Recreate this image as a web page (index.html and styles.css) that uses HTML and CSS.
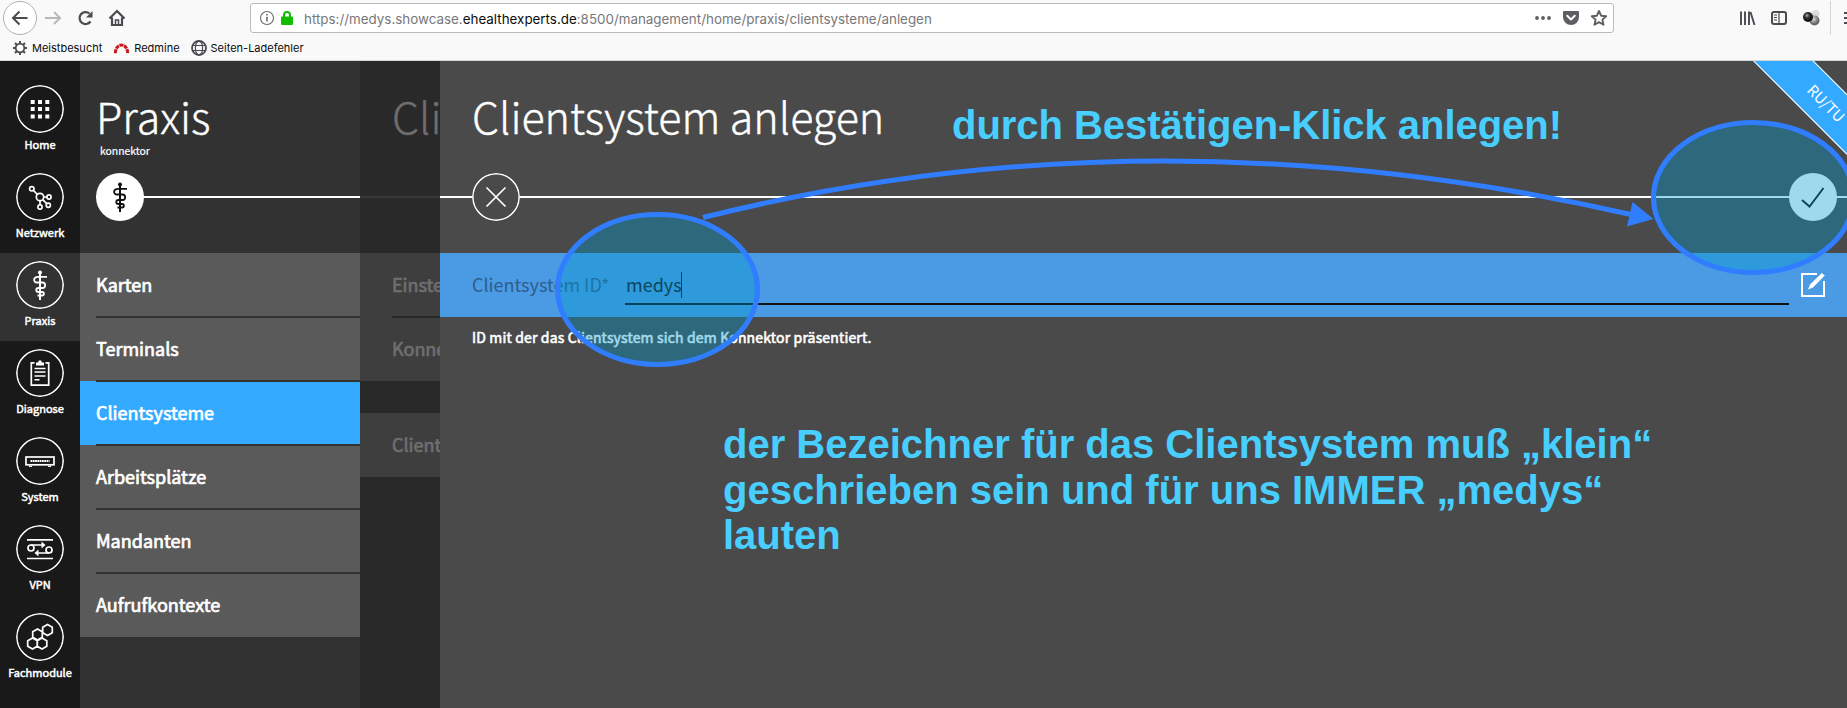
FILE: index.html
```html
<!DOCTYPE html>
<html lang="de">
<head>
<meta charset="utf-8">
<title>Clientsystem anlegen</title>
<link rel="stylesheet" href="styles.css">
</head>
<body>
<svg class="defs" width="0" height="0">
  <defs>
    <symbol id="staff" viewBox="0 0 48 48">
      <g fill="none" stroke="currentColor" stroke-width="1.8">
        <path d="M24 11V39" stroke-width="2"/>
        <path d="M31 15.8H22C17 15.8 17 21.5 21 21.5H26.500C30 21.500 30 27 26.500 27H22.500C19.500 27 19.500 31 22.500 31H26C28.500 31 28.500 34.500 26 34.500H21.500"/>
      </g>
      <circle cx="24" cy="11.500" r="2" fill="currentColor"/>
    </symbol>
  </defs>
</svg>
<div class="screen">
  <header class="browser">
    <div class="toolbar">
      <svg class="nav-icons" width="130" height="36" viewBox="0 0 130 36" fill="none" stroke="#4a4a4f" stroke-width="2">
        <circle cx="20" cy="18" r="16.500" fill="#fff" stroke="#b1b1b1" stroke-width="1"/>
        <path d="M27.500 18H13.500M19.500 11.500L13 18L19.500 24.500"/>
        <path d="M45 18H59.500M54 12L60 18L54 24" stroke="#b8b8ba"/>
        <path d="M90.500 21.500A6 6 0 1 1 89.500 13.500" stroke-width="2.200"/>
        <path d="M92.500 11V17.500H86Z" fill="#4a4a4f" stroke="none"/>
        <path d="M109.500 18.500L117 11L124.500 18.500M112 17.500V25H122V17.500" stroke-width="2.200"/>
        <path d="M115.500 25V20H118.500V25" stroke-width="1.500"/>
      </svg>
      <div class="urlbar">
        <svg width="29" height="28" viewBox="0 0 29 28">
          <circle cx="16" cy="14" r="6.500" fill="none" stroke="#6b6b6e" stroke-width="1.100"/>
          <path d="M16 12.800V17.500M16 10V11.500" stroke="#6b6b6e" stroke-width="1.600"/>
        </svg>
        <svg class="lock" width="14" height="28" viewBox="0 0 14 28">
          <path d="M4 13V11A3 3 0 0 1 10 11V13" fill="none" stroke="#12bc00" stroke-width="2"/>
          <rect x="1" y="12.500" width="12" height="8.500" rx="1" fill="#12bc00"/>
        </svg>
        <span class="url">https://medys.showcase.<b>ehealthexperts.de</b>:8500/management/home/praxis/clientsysteme/anlegen</span>
        <svg class="url-actions" width="84" height="28" viewBox="-1 0 84 28">
          <g fill="#5f5f63"><circle cx="7" cy="14" r="1.900"/><circle cx="13" cy="14" r="1.900"/><circle cx="19" cy="14" r="1.900"/>
          <path d="M34 7H48Q49 7 49 8V13A8 8 0 0 1 33 13V8Q33 7 34 7Z"/></g>
          <path d="M37.200 11.800L41 15.400L44.800 11.800" fill="none" stroke="#fff" stroke-width="2" stroke-linecap="round" stroke-linejoin="round"/>
          <path d="M69 7L71.100 11.700L76.200 12.200L72.400 15.600L73.500 20.700L69 18.100L64.500 20.700L65.600 15.600L61.800 12.200L66.900 11.700Z" fill="none" stroke="#5f5f63" stroke-width="1.900" stroke-linejoin="round"/>
        </svg>
      </div>
      <svg class="tool-icons" width="117" height="36" viewBox="1730 0 117 36">
        <defs><radialGradient id="ball" cx=".4" cy=".35"><stop offset="0" stop-color="#aaa"/><stop offset=".5" stop-color="#333"/><stop offset="1" stop-color="#111"/></radialGradient>
        <radialGradient id="ball2" cx=".4" cy=".35"><stop offset="0" stop-color="#ddd"/><stop offset="1" stop-color="#666"/></radialGradient></defs>
        <path d="M1741 11.500V25M1745 11.500V25M1749 11.500V25M1750.500 12L1754.500 25" stroke="#4a4a4f" stroke-width="1.900" fill="none"/>
        <rect x="1772" y="12" width="14" height="12" rx="2" fill="none" stroke="#4a4a4f" stroke-width="2"/>
        <path d="M1779 12V24M1774 15H1777M1774 17.500H1777M1774 20H1777" stroke="#4a4a4f" stroke-width="1.200"/>
        <circle cx="1815.500" cy="14" r="4" fill="#ddd"/><circle cx="1814.500" cy="20.500" r="5" fill="url(#ball2)"/><circle cx="1808" cy="17" r="5" fill="url(#ball)"/>
        <path d="M1830.500 1V35" stroke="#d5d5d5"/>
        <path d="M1844 13H1848M1844 18H1848M1844 23H1848" stroke="#4a4a4f" stroke-width="2"/>
      </svg>
    </div>
    <div class="bookmarks">
      <span class="bm"><svg width="16" height="16" viewBox="0 0 16 16" fill="none" stroke="#4a4a4f"><circle cx="8" cy="8" r="4.300" stroke-width="1.700"/><path d="M8 1V3.500M8 12.500V15M1 8H3.500M12.500 8H15M3 3L5 5M11 11L13 13M13 3L11 5M5 11L3 13" stroke-width="1.900"/></svg><span>Meistbesucht</span></span>
      <span class="bm"><svg width="17" height="16" viewBox="0 0 18 16" fill="none" stroke="#c8191e" stroke-width="3.200"><path d="M2.500 13.500C2.500 2 15.500 2 15.500 13.500" stroke-dasharray="4.200 .7"/></svg><span>Redmine</span></span>
      <span class="bm"><svg width="16" height="16" viewBox="0 0 16 16" fill="none" stroke="#4a4a4f"><circle cx="8" cy="8" r="7" stroke-width="1.800"/><ellipse cx="8" cy="8" rx="3.600" ry="7" stroke-width="1.200"/><path d="M1.500 5.500H14.500M1.500 10.500H14.500" stroke-width="1.200"/></svg><span>Seiten-Ladefehler</span></span>
    </div>
  </header>

  <div class="app">
    <nav class="rail">
      <a class="rail-item"><svg class="disc" viewBox="0 0 48 48"><circle class="ring" cx="24" cy="24" r="23.200"/><path fill="#fff" d="M14.700 15h4v4h-4zM22 15h4v4h-4zM29.300 15h4v4h-4zM14.700 22h4v4h-4zM22 22h4v4h-4zM29.300 22h4v4h-4zM14.700 29.500h4v4h-4zM22 29.500h4v4h-4zM29.300 29.500h4v4h-4z"/></svg><span>Home</span></a>
      <a class="rail-item"><svg class="disc" viewBox="0 0 48 48"><circle class="ring" cx="24" cy="24" r="23.200"/><g class="line"><circle cx="24" cy="24" r="3.700"/><circle cx="15.800" cy="15.800" r="2.200"/><circle cx="33" cy="24" r="2.100"/><circle cx="32.300" cy="32.300" r="2.100"/><circle cx="24" cy="34" r="2.100"/><path d="M17.500 17.500L21.300 21.300M27.700 24H31M26.700 26.700L30.700 30.700M24 27.700V32"/></g></svg><span>Netzwerk</span></a>
      <a class="rail-item active"><svg class="disc" viewBox="0 0 48 48"><circle class="ring" cx="24" cy="24" r="23.200"/><use href="#staff"/></svg><span>Praxis</span></a>
      <a class="rail-item"><svg class="disc" viewBox="0 0 48 48"><circle class="ring" cx="24" cy="24" r="23.200"/><g class="line"><path d="M18.500 13.800H15.300V36.200H32.700V13.800H29.500"/><path d="M18.500 19.500H29.500M18.500 23H29.500M18.500 27H29.500M18.500 30.700H23.500" stroke-width="1.500"/></g><path d="M20 16.500V13.500H22.200C22.200 10.500 25.800 10.500 25.800 13.500H28V16.500Z" fill="#fff"/></svg><span>Diagnose</span></a>
      <a class="rail-item"><svg class="disc" viewBox="0 0 48 48"><circle class="ring" cx="24" cy="24" r="23.200"/><g class="line"><rect x="10" y="20" width="28" height="7.800"/><path d="M14.500 24H33.500" stroke-dasharray="1.800 .5" stroke-width="2.200"/><path d="M13 29.300H16M32 29.300H35" stroke-width="1.200"/></g></svg><span>System</span></a>
      <a class="rail-item"><svg class="disc" viewBox="0 0 48 48"><circle class="ring" cx="24" cy="24" r="23.200"/><g class="line"><path d="M11 14.800H37M11 33.500H37"/><circle cx="15" cy="23" r="3"/><circle cx="33" cy="25" r="3"/><path d="M15 20H28M33 28H20"/></g><path d="M25.500 16.500V23.500L29.500 20ZM22.500 24.500V31.500L18.500 28Z" fill="#fff"/></svg><span>VPN</span></a>
      <a class="rail-item"><svg class="disc" viewBox="0 0 48 48"><circle class="ring" cx="24" cy="24" r="23.200"/><g class="line"><path d="M31.500 11.500L36.300 14.300V19.700L31.500 22.500L26.700 19.700V14.300ZM21.500 16L26.300 18.800V24.200L21.500 27L16.700 24.200V18.800ZM16.500 25L21.300 27.800V33.200L16.500 36L11.700 33.200V27.800ZM26 25L30.800 27.800V33.200L26 36L21.200 33.200V27.800Z"/></g></svg><span>Fachmodule</span></a>
    </nav>

    <section class="panel">
      <div class="head">
        <h1 class="title">Praxis</h1>
        <p class="sub">konnektor</p>
        <div class="track"><svg class="disc solid" viewBox="0 0 48 48"><use href="#staff"/></svg></div>
      </div>
      <ul class="menu">
        <li><span>Karten</span></li><li><span>Terminals</span></li><li class="selected"><span>Clientsysteme</span></li><li><span>Arbeitsplätze</span></li><li><span>Mandanten</span></li><li><span>Aufrufkontexte</span></li>
      </ul>
    </section>

    <section class="panel dimmed">
      <div class="head"><h1 class="title">Cli</h1><div class="track"></div></div>
      <ul class="menu"><li><span>Einste</span></li><li><span>Konne</span></li></ul>
      <ul class="menu"><li><span>Client</span></li></ul>
    </section>

    <main class="form">
      <div class="head">
        <h1 class="title">Clientsystem anlegen</h1>
        <div class="track">
          <svg class="disc cancel" viewBox="0 0 48 48"><circle class="ring" cx="24" cy="24" r="23.200"/><path class="line" d="M14.500 14.500L33.500 33.500M33.500 14.500L14.500 33.500"/></svg>
          <svg class="disc solid" viewBox="0 0 48 48"><path d="M13 27L20.500 33.500L34.500 15" fill="none" stroke="#111" stroke-width="1.900"/></svg>
        </div>
      </div>
      <div class="field">
        <label>Clientsystem ID*</label>
        <div class="input"><span>medys</span><i class="caret"></i></div>
        <svg width="26" height="26" viewBox="0 0 26 26"><path d="M17 2H2V24H24V9" fill="none" stroke="#fff" stroke-width="2"/><path d="M8 17.500L10 12.500L21.800 1L24.800 3.500L13 15.500Z" fill="#fff"/></svg>
      </div>
      <p class="hint">ID mit der das Clientsystem sich dem Konnektor präsentiert.</p>
      <div class="ribbon">RU/TU</div>
    </main>
  </div>

  <svg class="marks" width="1847" height="708" viewBox="0 0 1847 708">
    <g fill="rgba(0,154,207,.376)" stroke="#307eff" stroke-width="5.200">
      <ellipse cx="657.500" cy="289.500" rx="100" ry="75"/>
      <ellipse cx="1753.500" cy="197.500" rx="100" ry="75"/>
    </g>
    <path d="M703 217.500Q1150 106 1631 214.500" fill="none" stroke="#307eff" stroke-width="5"/>
    <path d="M1632.500 202L1653.500 219L1627 226.500Z" fill="#307eff"/>
  </svg>
  <p class="note note-top">durch Bestätigen-Klick anlegen!</p>
  <p class="note note-body">der Bezeichner für das Clientsystem muß „klein“<br>geschrieben sein und für uns IMMER „medys“<br>lauten</p>
</div>
</body>
</html>
```
FILE: styles.css
```css
* { box-sizing: border-box; margin: 0; padding: 0; }
body { background: #4a4a4a; overflow: hidden; }
.defs { position: absolute; }
.screen { position: relative; width: 1847px; height: 708px; overflow: hidden; display: flex; flex-direction: column; font-family: "Noto Sans CJK SC", "Noto Sans", sans-serif; color: #fff; }

.browser { height: 61px; background: #f9f9f9; border-bottom: 1px solid #d3d7d5; font-family: Inter, Roboto, sans-serif; color: #0c0c0d; }
.toolbar { display: flex; height: 36px; }
.urlbar { display: flex; align-items: center; margin: 3px 0 0 120px; width: 1364px; height: 30px; background: #fff; border: 1px solid #bcbcbc; border-radius: 3px; }
.urlbar svg { flex: none; }
.url { flex: 1; margin-left: 10px; padding-top: 2px; font-size: 13.38px; white-space: nowrap; color: #77777a; }
.url b { font-weight: 400; color: #0c0c0d; }
.tool-icons { margin-left: auto; flex: none; }
.bookmarks { display: flex; height: 24px; align-items: center; padding-left: 12px; font-size: 11px; }
.bm { display: flex; align-items: center; white-space: nowrap; gap: 4px; margin-right: 11px; }

.app { display: flex; height: 647px; }
.rail { width: 80px; flex: none; background: #191919; padding-top: 16px; }
.rail-item { display: flex; flex-direction: column; align-items: center; height: 88px; padding-top: 8px; font-size: 11px; -webkit-text-stroke: .5px; line-height: 16px; }
.rail-item span { margin-top: 3px; }
.rail-item.active { background: #323232; }
.disc { width: 48px; height: 48px; flex: none; display: block; border-radius: 50%; }
.ring { fill: none; stroke: #fff; stroke-width: 1.6; }
.line { fill: none; stroke: #fff; stroke-width: 1.7; }

.panel { width: 280px; flex: none; background: #323232; }
.head { display: flex; flex-direction: column; height: 192px; padding-left: 16px; }
.title { height: 54px; margin-top: 27px; line-height: 54px; font-size: 43px; font-weight: 300; -webkit-text-stroke: .4px; white-space: nowrap; }
.sub { height: 16px; margin: 1px 0 14px 4px; font-size: 10.4px; line-height: 16px; -webkit-text-stroke: .2px; }
.track { display: flex; height: 48px; margin-top: 31px; background: linear-gradient(#fff, #fff) 0 23px / 100% 2px no-repeat; }
.sub + .track { margin-top: 0; }
.solid { background: #fff; color: #111; }
.menu { list-style: none; }
.menu li { position: relative; height: 64px; padding-left: 16px; line-height: 62px; background: #5a5a5a; font-size: 18px; -webkit-text-stroke: .7px; white-space: nowrap; }
.menu li + li::before { content: ""; position: absolute; left: 16px; right: 0; top: -1px; height: 2px; background: #323232; }
.menu .selected { background: #33a9ff; }

.panel.dimmed { width: 80px; overflow: hidden; background: #292929; color: #6e6e6e; }
.dimmed .head { padding-left: 0; }
.dimmed .title { padding-left: 32px; }
.dimmed .track { background-image: linear-gradient(#383838, #383838); }
.dimmed .menu { margin-bottom: 32px; }
.dimmed .menu li { padding-left: 32px; background: #3e3e3e; }
.dimmed .menu li + li::before { left: 32px; background: #292929; }

.form { position: relative; flex: 1; overflow: hidden; background: #4a4a4a; }
.form .head { padding-left: 0; }
.form .title { padding-left: 32px; }
.form .track { justify-content: space-between; padding: 0 10px 0 32px; }
.cancel { background: #4a4a4a; }
.field { display: flex; align-items: center; height: 64px; padding: 0 21px 0 32px; background: #4a9ae4; }
.field label { width: 153px; padding-bottom: 2px; font-size: 18px; color: #2f5d8c; white-space: nowrap; }
.input { display: flex; align-items: center; align-self: flex-end; width: 1164px; height: 40px; margin-bottom: 12px; padding: 1px 0 0 1px; border-bottom: 2px solid #111; font-size: 18px; line-height: 26px; color: #111; }
.input span { margin-top: -2px; }
.caret { width: 1px; height: 26px; background: #111; margin-left: -1px; }
.field svg { margin-left: auto; flex: none; }
.hint { margin: 8px 0 0 32px; font-size: 14px; line-height: 24px; letter-spacing: .16px; -webkit-text-stroke: .6px; }
.ribbon { position: absolute; left: 1286px; top: 21px; width: 200px; height: 43px; border: 1px solid #fff; background: #33a9ff; transform: rotate(45deg); text-align: center; line-height: 40px; font-size: 15px; }

.marks { position: absolute; left: 0; top: 0; }
.note { position: absolute; font: 700 40px/45.6px "Liberation Sans", Arial, sans-serif; color: #48cfff; white-space: nowrap; }
.note-top { left: 952px; top: 103px; letter-spacing: -.04px; }
.note-body { left: 723px; top: 422px; }
```
